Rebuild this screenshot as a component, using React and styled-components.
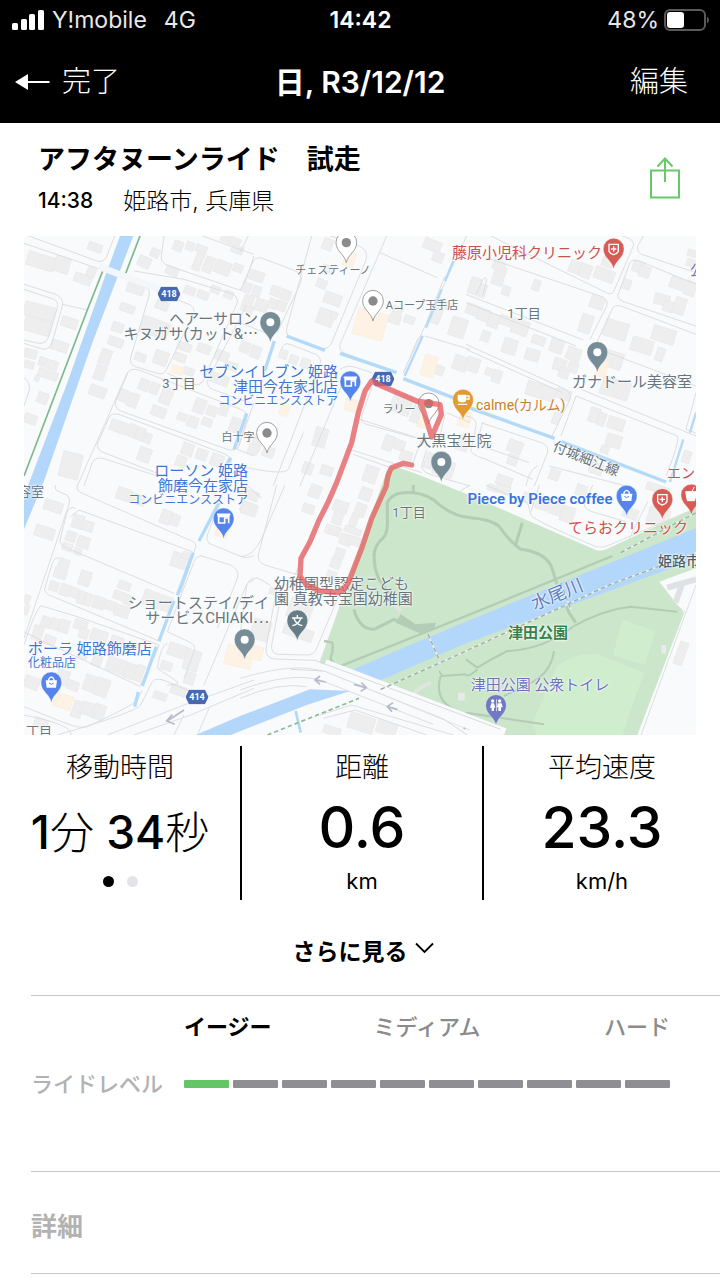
import React from "react";
import styled, { createGlobalStyle } from "styled-components";

const GlobalStyle = createGlobalStyle`
  *, *::before, *::after { box-sizing: border-box; }
  body {
    margin: 0;
    background: #fff;
    color: #000;
    font-family: Inter, "Noto Sans CJK JP", sans-serif;
  }
  button {
    padding: 0;
    border: 0;
    background: none;
    color: inherit;
    font: inherit;
    cursor: pointer;
  }
  h1, h2, p { margin: 0; }
`;

/* ---------- header ---------- */

const Header = styled.header`
  background: #000;
  color: #fff;
`;

const StatusBar = styled.div`
  display: grid;
  grid-template-columns: 1fr auto 1fr;
  align-items: center;
  height: 40px;
  padding: 0 11px 0 12px;
  font-size: 23px;
  line-height: 40px;
  color: #e8e8e8;
`;

const StatusGroup = styled.div`
  display: flex;
  align-items: center;
  justify-content: ${(p) => (p.$end ? "flex-end" : "flex-start")};
  gap: ${(p) => p.$gap}px;
`;

const Clock = styled.time`
  font-weight: 600;
  color: #fff;
`;

const NavBar = styled.nav`
  display: grid;
  grid-template-columns: 1fr auto 1fr;
  align-items: center;
  height: 83px;
  padding: 0 32px 0 14px;
  font-size: 29px;
`;

const NavButton = styled.button`
  display: flex;
  align-items: center;
  gap: 12px;
  justify-self: ${(p) => (p.$end ? "end" : "start")};
  font-weight: 300;
  line-height: 40px;
`;

const NavTitle = styled.h1`
  padding-left: 18px;
  font-size: 30px;
  font-weight: 600;
  line-height: 40px;
`;

/* ---------- ride summary ---------- */

const Summary = styled.section`
  display: flex;
  align-items: center;
  justify-content: space-between;
  height: 113px;
  padding: 0 40px 0 38px;
`;

const RideTitle = styled.h2`
  font-size: 27px;
  font-weight: 700;
  line-height: 42px;
`;

const RideMeta = styled.p`
  display: flex;
  gap: 30px;
  font-size: 23px;
  font-weight: 300;
  line-height: 40px;
`;

const StartTime = styled.time`
  font-size: 21px;
  font-weight: 500;
`;

/* ---------- map ---------- */

const MapFrame = styled.section`
  position: relative;
  margin: 0 24px;
  aspect-ratio: 672 / 499;
  overflow: hidden;
  background: #f8fafc;
  font-family: Roboto, "Noto Sans CJK JP", sans-serif;
`;

const MapLayer = styled.svg`
  position: absolute;
  inset: 0;
  width: 100%;
  height: 100%;
`;

const shifts = { left: "0", center: "-50%", right: "-100%" };

const MapLabel = styled.div`
  position: absolute;
  left: ${(p) => (p.$x / 672) * 100}%;
  top: ${(p) => (p.$y / 499) * 100}%;
  transform: translate(${(p) => shifts[p.$align || "center"]}, -50%) rotate(${(p) => p.$turn || 0}deg);
  text-align: ${(p) => p.$align || "center"};
  white-space: nowrap;
  font-size: ${(p) => p.$size || 15}px;
  line-height: 15px;
  font-weight: ${(p) => p.$weight || 400};
  color: ${(p) => p.$color || "#66757e"};
  text-shadow: 0 0 1px #fff, 0 0 2px #fff, 0 0 3px #fff;
`;

const LabelNote = styled.div`
  font-size: 12px;
  line-height: 13px;
`;

const RouteShield = styled.div`
  position: absolute;
  left: ${(p) => (p.$x / 672) * 100}%;
  top: ${(p) => (p.$y / 499) * 100}%;
  width: 23px;
  height: 15px;
  transform: translate(-50%, -50%);
  background: #4569b5;
  color: #fff;
  clip-path: polygon(16% 0, 84% 0, 100% 50%, 84% 100%, 16% 100%, 0 50%);
  text-align: center;
  font-size: 9px;
  font-weight: 700;
  line-height: 15px;
`;

/* ---------- stats ---------- */

const Stats = styled.section`
  display: grid;
  grid-template-columns: 240fr 2px 240fr 2px 236fr;
  margin-top: 11px;
  min-height: 154px;
`;

const StatRule = styled.div`
  background: #000;
`;

const Stat = styled.div`
  display: flex;
  flex-direction: column;
  align-items: center;
  white-space: nowrap;
`;

const StatLabel = styled.div`
  height: 40px;
  font-size: 27px;
  font-weight: 300;
  line-height: 43px;
`;

const StatValue = styled.div`
  height: 82px;
  font-size: ${(p) => (p.$compact ? 46 : 57)}px;
  font-weight: 500;
  line-height: ${(p) => (p.$compact ? 92 : 83)}px;
`;

const StatSuffix = styled.span`
  font-size: 44px;
  font-weight: 300;
`;

const StatUnit = styled.div`
  font-size: 22px;
  line-height: 26px;
`;

const Dots = styled.div`
  display: flex;
  gap: 13px;
  padding: 8px 0;
`;

const Dot = styled.span`
  width: 11px;
  height: 11px;
  border-radius: 50%;
  background: ${(p) => (p.$active ? "#000" : "#e4e4e8")};
`;

const MoreButton = styled.button`
  display: flex;
  align-items: center;
  justify-content: center;
  gap: 7px;
  width: 100%;
  height: 95px;
  padding: 4px 0 0 6px;
  font-size: 23px;
  font-weight: 700;

  svg {
    margin-bottom: 4px;
  }
`;

/* ---------- ride level and details ---------- */

const Panel = styled.section`
  margin-left: 31px;
  border-top: 1px solid #c8c8c8;
`;

const LevelPanel = styled(Panel)`
  display: grid;
  grid-template-columns: 153px 1fr;
  height: 176px;
  padding-right: 50px;
  grid-template-rows: 58px 60px;
  align-items: center;
`;

const LevelScale = styled.div`
  grid-column: 2;
  display: grid;
  grid-template-columns: 1fr auto 1fr;
  font-size: 22px;
  font-weight: 500;
  color: #8b8b8b;
`;

const LevelName = styled.span`
  color: ${(p) => (p.$active ? "#000" : "inherit")};
  font-weight: ${(p) => (p.$active ? 700 : "inherit")};
  text-align: ${(p) => p.$align || "left"};
`;

const LevelLabel = styled.h2`
  padding-bottom: 4px;
  font-size: 22px;
  font-weight: 500;
  color: #b2b2b2;
`;

const LevelMeter = styled.div`
  display: grid;
  grid-template-columns: repeat(10, 1fr);
  gap: 4px;
`;

const LevelStep = styled.span`
  height: 8px;
  border-radius: 1px;
  background: ${(p) => (p.$active ? "#64c466" : "#8f8e93")};
`;

const DetailPanel = styled(Panel)`
  height: 102px;
`;

const DetailTitle = styled.h2`
  font-size: 26px;
  font-weight: 700;
  line-height: 110px;
  color: #b2b2b2;
`;

/* ---------- icons ---------- */

const SignalIcon = () => (
  <svg width="32" height="20" viewBox="0 0 32 20" fill="#fff" aria-hidden="true">
    <rect x="0" y="13" width="6" height="7" rx="1.5" />
    <rect x="9" y="9" width="6" height="11" rx="1.5" />
    <rect x="17" y="4" width="6" height="16" rx="1.5" />
    <rect x="26" y="0" width="6" height="20" rx="1.5" />
  </svg>
);

const BatteryIcon = () => (
  <svg width="45" height="22" viewBox="0 0 45 22" aria-hidden="true">
    <rect x="1" y="1" width="40" height="20" rx="5" fill="none" stroke="#5a5a5a" strokeWidth="2" />
    <rect x="3" y="3" width="17" height="16" rx="3" fill="#fff" />
    <path d="M43 7.500Q45 8.500 45 11T43 14.500Z" fill="#5a5a5a" />
  </svg>
);

const BackIcon = () => (
  <svg width="36" height="18" viewBox="0 0 36 18" aria-hidden="true">
    <path d="M13 9H35.500" stroke="#fff" strokeWidth="2" />
    <path d="M1 9 14 1V17Z" fill="#fff" />
  </svg>
);

const ShareIcon = () => (
  <svg width="30" height="42" viewBox="0 0 30 42" fill="none" stroke="#66c968" strokeWidth="2" aria-hidden="true">
    <path d="M1 13.500H29V40.500H1Z" />
    <path d="M15 25V1.500M7.500 9.500 15 1.500 22.500 9.500" />
  </svg>
);

const ChevronIcon = () => (
  <svg width="19" height="12" viewBox="0 0 19 12" fill="none" stroke="#000" strokeWidth="1.800" aria-hidden="true">
    <path d="M1 1.500 9.500 10 18 1.500" />
  </svg>
);

/* ---------- map drawing ---------- */

/* The city is drawn in six sectors. Each building is [x, y, width, height, turn]. */
const sectors = [
  {
    x: 0,
    y: 0,
    streets: `M0 -5L130 42L218 75Q240 80 248 62L272 0M0 22L245 105M0 145L95 175Q120 185 115 210L85 318Q75 345 50 338L0 322
      M0 160L85 188Q105 195 100 215L75 300Q65 325 45 322L0 312M115 205L190 222M0 425Q22 440 15 465L0 510
      M420 0L412 60Q410 80 430 88L640 160Q655 165 660 150L690 60M535 0L690 55M275 115L362 152Q380 160 375 180L320 365Q315 385 335 392L400 412Q420 418 428 400L510 230Q512 212 495 205L395 165
      M430 412L510 445Q530 450 540 430L640 200Q642 180 620 172L480 130L330 105M690 165L552 430Q545 450 565 460L690 505
      M160 750L310 410Q320 395 345 402L650 520Q675 530 668 550L645 630Q633 648 610 640L290 525Q270 515 275 495L312 410
      M220 625L255 545Q262 530 285 535L605 655Q630 668 618 690M220 625Q220 645 240 650L400 712M180 750L205 680Q215 660 240 668L400 720M690 500L640 640L690 660`,
    buildings: [
      [8, 55, 85, 42, 17], [92, 62, 45, 48, 17], [150, 115, 52, 28, 20], [188, 95, 26, 28, 20], [192, 22, 42, 24, 20], [308, 145, 52, 28, 20],
      [0, 205, 92, 42, 14], [0, 248, 80, 44, 16], [112, 245, 48, 30, 18], [288, 205, 44, 24, 20], [264, 260, 34, 28, 20], [252, 305, 46, 26, 20],
      [228, 340, 32, 46, 20], [212, 388, 32, 44, 20], [196, 450, 50, 32, 20], [80, 315, 52, 30, 18], [44, 370, 58, 26, 18], [42, 402, 60, 26, 18],
      [46, 364, 20, 18, 20], [32, 418, 14, 18, 20], [40, 470, 32, 32, 20], [0, 340, 38, 26, 16], [0, 375, 30, 22, 16], [0, 535, 38, 28, 20],
      [110, 650, 60, 76, 14], [332, 352, 34, 24, 20], [390, 345, 42, 42, 20], [350, 250, 85, 50, 20], [395, 195, 38, 26, 20], [460, 320, 42, 24, 20],
      [450, 352, 36, 24, 20], [476, 395, 34, 22, 20], [520, 325, 40, 26, 20], [574, 345, 40, 30, 20], [600, 378, 40, 24, 20], [560, 415, 54, 30, 20],
      [342, 62, 38, 32, 25], [380, 38, 26, 26, 25], [425, 92, 38, 26, 22], [448, 15, 28, 30, 22], [486, 18, 24, 26, 22], [515, 28, 34, 22, 22],
      [510, 52, 24, 52, 22], [540, 62, 28, 48, 22], [572, 75, 48, 40, 22], [628, 84, 28, 24, 22], [590, 0, 60, 24, 22], [622, 30, 36, 22, 22],
      [480, 152, 34, 24, 22], [520, 165, 34, 24, 22], [560, 150, 28, 22, 22], [600, 165, 28, 22, 22], [650, 205, 38, 24, 22],
      [345, 430, 30, 34, 22], [378, 440, 26, 34, 22], [410, 455, 34, 50, 22], [282, 460, 30, 36, 20], [312, 472, 30, 42, 20], [382, 512, 44, 30, 20],
      [460, 532, 28, 22, 20], [490, 542, 32, 32, 20], [510, 488, 34, 44, 20], [548, 510, 30, 30, 20], [534, 546, 30, 24, 20], [586, 505, 26, 34, 20], [618, 545, 28, 44, 20],
      [258, 555, 52, 34, 20], [312, 565, 26, 38, 20], [336, 575, 26, 38, 20], [360, 592, 22, 30, 20], [342, 635, 38, 42, 20], [474, 622, 34, 36, 20], [516, 640, 34, 32, 20], [456, 660, 30, 32, 20], [560, 655, 38, 36, 20],
    ],
    shops: [[442, 390, 36, 24, 20]],
  },
  {
    x: 648,
    y: 0,
    streets: `M0 165L40 75Q50 60 70 68L160 102Q192 115 182 140L112 290M215 0L140 278Q136 300 158 308L248 338Q268 338 276 318L378 72Q385 45 362 32L250 -8
      M440 0L300 325Q296 345 316 352L460 405M420 50L592 125M680 0L490 410M615 120L560 258M555 300L690 340M550 300Q535 300 528 320L490 412
      M125 340Q130 318 150 325L228 355Q246 365 240 385L100 750M0 260L100 300M300 400Q320 385 350 395L395 410M320 410L180 750
      M395 455L365 540Q362 560 380 565L525 605M360 550L545 610M545 610L515 690M330 640L545 710M340 655L480 705M560 640L545 690Q545 705 570 715L690 750
      M490 430L690 500M615 535L600 600M620 530L690 560M0 690Q130 720 145 700L190 590M0 50L25 0M60 610L0 590`,
    buildings: [
      [248, 8, 30, 34, 22], [248, 88, 30, 20, 22], [230, 130, 30, 26, 22], [252, 172, 52, 34, 20], [232, 220, 50, 48, 20], [272, 228, 20, 20, 20],
      [28, 105, 44, 30, 18], [8, 140, 26, 30, 20], [38, 150, 24, 32, 20], [10, 178, 30, 32, 20], [45, 190, 40, 36, 20], [92, 150, 28, 30, 20], [122, 162, 30, 30, 20], [85, 188, 26, 30, 20], [112, 195, 26, 30, 20],
      [0, 318, 30, 32, 20], [32, 330, 30, 36, 20], [118, 342, 24, 26, 20], [148, 358, 26, 26, 20], [182, 368, 28, 28, 20], [448, 235, 34, 28, 20], [492, 240, 32, 22, 20], [458, 212, 30, 20, 20],
      [550, 12, 54, 32, 22], [578, 48, 32, 30, 22], [575, 215, 28, 48, 20], [598, 195, 32, 22, 20], [630, 245, 48, 58, 18], [578, 388, 34, 28, 20], [640, 360, 42, 44, 20],
      [455, 470, 34, 58, 20], [486, 480, 28, 60, 20], [516, 500, 26, 60, 20], [430, 598, 30, 46, 20], [462, 612, 32, 30, 20], [480, 645, 36, 30, 20], [372, 690, 40, 50, 20],
      [222, 575, 38, 58, 16], [242, 690, 36, 28, 18], [188, 680, 30, 34, 20], [35, 600, 30, 46, 20], [68, 632, 34, 32, 20], [25, 625, 30, 30, 20], [555, 650, 26, 48, 20], [580, 672, 62, 48, 18], [650, 600, 36, 44, 18],
    ],
    shops: [[345, 225, 92, 80, 16], [312, 48, 32, 44, 18], [548, 358, 40, 64, 16], [120, 505, 26, 34, 20], [535, 540, 26, 36, 20], [315, 490, 40, 36, 18], [655, 540, 34, 32, 20]],
  },
  {
    x: 1326,
    y: 0,
    streets: `M75 0L425 172Q440 178 446 160L502 30Q505 15 490 8L470 0M532 0L515 30Q512 50 530 56L690 110M690 145L520 75Q500 68 492 80L455 178Q455 190 470 196L690 270
      M60 65L408 182Q428 192 422 210L372 310M0 175L352 312M690 295L465 210Q445 205 438 220L392 320Q390 335 405 342L690 450M0 200L330 330M0 325L295 458Q318 470 312 490L258 600
      M50 180L62 130Q55 115 42 150L30 175M0 340L290 470M345 460L690 600M330 480L635 600Q640 620 600 720M330 480L285 600M0 540Q35 545 30 570L15 640Q10 655 60 670L200 730
      M45 560L232 622Q250 632 244 652L205 750M50 560L38 600Q35 625 60 635L190 680M690 470L660 580L690 592M180 750Q190 700 215 690M250 690L480 750`,
    buildings: [
      [310, 75, 32, 36, 20], [340, 85, 36, 40, 20], [385, 98, 60, 36, 20], [408, 65, 34, 28, 20], [500, 75, 34, 34, 18], [520, 90, 32, 34, 18], [470, 130, 24, 30, 20], [612, 125, 42, 34, 20], [655, 135, 34, 44, 20],
      [10, 125, 30, 50, 18], [40, 145, 20, 40, 18], [82, 90, 34, 58, 18], [108, 150, 24, 28, 18], [200, 132, 22, 32, 20], [80, 75, 36, 28, 20], [372, 182, 42, 36, 20], [342, 235, 36, 56, 18],
      [565, 175, 46, 32, 15], [592, 195, 30, 32, 18], [624, 185, 34, 50, 18], [0, 205, 40, 32, 20], [34, 218, 36, 36, 20], [66, 235, 34, 40, 20], [100, 240, 40, 28, 20], [138, 252, 50, 44, 20],
      [45, 285, 26, 32, 20], [110, 308, 42, 46, 18], [178, 340, 42, 34, 16], [252, 312, 40, 38, 20], [302, 335, 42, 38, 20], [198, 300, 40, 26, 20], [262, 368, 38, 36, 18], [306, 378, 30, 32, 20], [278, 398, 30, 28, 20],
      [0, 365, 40, 42, 18], [58, 398, 30, 22, 20], [80, 402, 26, 38, 20], [180, 445, 90, 42, 17], [270, 460, 44, 30, 20], [260, 530, 20, 34, 20], [415, 255, 70, 52, 17], [495, 308, 66, 42, 17], [558, 275, 70, 44, 17], [570, 335, 24, 40, 20],
      [402, 345, 68, 50, 17], [405, 430, 86, 54, 17], [370, 515, 30, 44, 18], [396, 530, 22, 40, 18], [425, 545, 50, 36, 18], [420, 596, 46, 38, 17], [404, 630, 24, 22, 20], [125, 614, 44, 36, 20], [125, 655, 30, 32, 20], [90, 720, 48, 30, 20], [650, 645, 24, 36, 18],
      [665, 42, 26, 20, 18], [662, 70, 30, 22, 18], [370, 680, 40, 34, 18], [250, 700, 30, 32, 20],
    ],
    shops: [[395, 372, 28, 48, 18], [0, 528, 12, 26, 18]],
  },
  {
    x: 0,
    y: 747,
    streets: `M95 0Q90 15 105 20L128 30Q140 40 136 55L0 460M160 0Q155 18 175 25L508 170Q522 178 512 195L470 325M155 70Q135 62 128 85L108 165Q108 182 130 190L450 325
      M105 220Q90 215 85 235L62 310Q60 325 80 332L410 470M50 362L160 395L405 480Q400 500 350 600M50 362Q30 385 0 480M140 95L165 75L505 200M0 440L60 470L350 605M355 615L340 645Q330 660 190 725Q170 735 100 705L0 665M690 210Q670 225 640 210L555 175Q545 165 550 150L590 50
      M530 212L620 240Q648 255 640 280L580 430M530 212Q515 215 510 230L430 440L490 468Q520 480 510 500L480 580M430 475Q410 480 400 550L460 590Q470 600 430 600
      M690 285Q670 290 665 305L540 600M500 620L430 590Q395 575 385 590L350 660Q340 680 100 750M690 585L480 660L250 750M690 610L500 690L330 750M555 670L520 750M480 690L450 750M140 750Q150 720 0 690`,
    buildings: [
      [60, 48, 56, 32, 18], [32, 125, 60, 34, 18], [145, 90, 34, 40, 16], [172, 108, 36, 30, 18], [126, 140, 30, 30, 20], [160, 155, 36, 34, 18], [115, 175, 30, 22, 20], [150, 190, 22, 20, 20],
      [104, 222, 32, 26, 20], [90, 250, 38, 30, 18], [166, 258, 34, 44, 18], [76, 290, 28, 28, 20], [108, 298, 28, 34, 20], [138, 308, 26, 30, 20], [162, 318, 20, 38, 20], [182, 325, 20, 38, 20], [206, 335, 36, 36, 18], [242, 348, 34, 28, 18], [272, 362, 44, 34, 18], [282, 290, 38, 24, 20], [268, 318, 32, 26, 20], [300, 330, 26, 30, 20], [355, 325, 90, 44, 20],
      [442, 205, 50, 44, 18], [475, 200, 22, 22, 18], [278, 10, 44, 36, 20], [318, 28, 46, 30, 20], [410, 75, 30, 42, 20], [440, 88, 26, 34, 20], [650, 52, 44, 32, 20],
      [52, 395, 30, 32, 20], [80, 400, 26, 34, 20], [105, 405, 30, 38, 18], [26, 422, 30, 44, 18], [60, 452, 34, 28, 20], [150, 405, 40, 30, 20], [165, 430, 28, 30, 20], [200, 435, 50, 36, 20], [260, 455, 38, 28, 20],
      [165, 498, 24, 24, 20], [205, 510, 28, 34, 20], [248, 515, 28, 44, 20], [278, 525, 26, 44, 20], [304, 535, 28, 46, 20], [334, 540, 24, 50, 20], [96, 555, 38, 44, 20], [130, 588, 34, 28, 20], [180, 570, 32, 48, 20], [212, 580, 42, 54, 20],
      [145, 648, 30, 50, 18], [172, 652, 36, 38, 18], [208, 658, 34, 46, 18], [432, 478, 56, 38, 18], [410, 530, 34, 26, 18], [482, 495, 44, 62, 18], [482, 562, 30, 36, 18], [440, 602, 46, 28, 20], [388, 622, 40, 22, 18], [30, 700, 40, 30, 20], [0, 330, 18, 26, 20], [0, 360, 14, 30, 20], [0, 575, 46, 36, 20],
    ],
    shops: [[605, 485, 80, 60, 14], [90, 628, 54, 42, 18], [575, 130, 36, 26, 18]],
  },
  {
    x: 648,
    y: 747,
    streets: `M110 0L55 210Q52 232 75 240L175 270M210 170L165 270M20 0L65 40M135 0L65 160Q40 215 0 215M0 450L20 300Q30 275 55 280L90 300M110 310L78 490Q76 520 105 522L225 526M125 320L95 480Q92 505 115 508L205 510Q222 508 230 490L295 335
      M0 580Q170 530 250 560L690 735M0 615Q150 560 240 585L580 718M0 640Q120 590 200 605M240 530L435 0M240 690L335 660L640 750M250 700L345 675L560 750M690 0L650 25`,
    buildings: [
      [208, 0, 34, 38, 20], [188, 58, 34, 26, 18], [280, 48, 44, 34, 18], [278, 80, 30, 38, 18], [256, 122, 46, 28, 18], [345, 55, 32, 40, 20], [330, 85, 22, 44, 20], [300, 148, 34, 32, 20], [325, 155, 36, 26, 18], [285, 190, 28, 30, 18], [272, 220, 30, 30, 20], [260, 258, 28, 26, 20], [360, 8, 34, 38, 20], [312, 128, 52, 18, 20],
      [0, 15, 56, 28, 20], [5, 55, 46, 36, 20], [325, 690, 78, 48, 18], [410, 712, 60, 36, 18], [250, 725, 52, 24, 18], [130, 425, 90, 34, 20], [145, 345, 70, 60, 20], [88, 310, 30, 20, 20], [35, 405, 54, 60, 18],
    ],
    shops: [[0, 480, 68, 40, 14]],
  },
  {
    x: 1326,
    y: 747,
    streets: "M60 0L185 55L195 90Q200 105 390 185Q410 190 430 180L690 70M220 0L195 80M380 0L355 60Q355 75 395 85L480 110M545 50L480 180M690 300L525 750M600 330L660 385",
    buildings: [[170, 25, 40, 28, 18], [210, 40, 38, 34, 18], [250, 55, 38, 34, 18], [285, 65, 40, 46, 18], [65, 0, 30, 18, 20], [90, 0, 42, 26, 20], [470, 70, 46, 30, 20], [545, 70, 64, 52, 16], [632, 470, 26, 70, 20], [540, 0, 70, 22, 18], [330, 0, 32, 32, 18]],
    shops: [],
  },
];

const Blocks = ({ list, fill, stroke }) =>
  list.map(([x, y, w, h, turn], i) => (
    <rect key={i} x={x} y={y} width={w} height={h} fill={fill} stroke={stroke} strokeWidth="2" transform={`rotate(${turn} ${x + w / 2} ${y + h / 2})`} />
  ));

const glyphs = {
  hole: <circle r="12" fill="#fff" />,
  quiet: <circle r="14" fill="#8b8b8b" />,
  store: (
    <g fill="none" stroke="#fff" strokeWidth="5">
      <path d="M-20 -13H20M-15 -7V13H3V-2H15V14" />
      <path d="M-18 -8H18" strokeWidth="8" />
    </g>
  ),
  bag: (
    <g>
      <path d="M-17 -7H17L14 15H-14Z" fill="#fff" />
      <path d="M-8 -5V-10Q0 -24 8 -10V-5" fill="none" stroke="#fff" strokeWidth="4" />
      <path d="M-7 1Q0 9 7 1" fill="none" stroke="#5484ec" strokeWidth="3" />
    </g>
  ),
  cross: (
    <g fill="none" stroke="#fff" strokeWidth="4">
      <path d="M-14 -14H14V7Q10 15 0 17Q-10 15 -14 7Z" />
      <path d="M0 -8V8M-8 0H8" />
    </g>
  ),
  cup: (
    <g>
      <path d="M-16 -16H10V-2Q10 7 1 7H-7Q-16 7 -16 -2Z" fill="#fff" />
      <path d="M10 -12H18V-3H10M-16 13H13" fill="none" stroke="#fff" strokeWidth="4" />
    </g>
  ),
  school: <path d="M-16 -8H16M0 -17V-8M-10 -6Q-3 11 15 15M10 -6Q3 11 -15 15" fill="none" stroke="#fff" strokeWidth="4" />,
  food: <path d="M-17 -10H15L10 17H-12ZM2 -11L9 -24" fill="#fff" stroke="#fff" strokeWidth="3" />,
  toilet: (
    <g fill="#fff">
      <circle cx="-10" cy="-13" r="5" />
      <circle cx="11" cy="-13" r="5" />
      <path d="M-14 -6H-6L-2 7H-6V17H-13V7H-18ZM5 -6H17L20 6H15V17H7V6H3ZM0 -18H2V18H0Z" />
    </g>
  ),
};

const pins = [
  [967, 20, "#fff", "quiet"],
  [1047, 195, "#fff", "quiet"],
  [739, 259, "#768d97", "hole"],
  [979, 437, "#5484ec", "store"],
  [729, 591, "#fff", "quiet"],
  [1214, 503, "#fff", "quiet"],
  [1317, 492, "#e39a32", "cup"],
  [1252, 678, "#768d97", "hole"],
  [1769, 39, "#d95b55", "cross"],
  [1720, 349, "#768d97", "hole"],
  [599, 848, "#5484ec", "store"],
  [662, 1211, "#768d97", "hole"],
  [82, 1340, "#5484ec", "bag"],
  [820, 1154, "#667d88", "school"],
  [1808, 780, "#5484ec", "bag"],
  [1915, 790, "#d95b55", "cross"],
  [2002, 777, "#d95b55", "food"],
  [1416, 1408, "#7079c4", "toilet"],
];

const Pin = ({ x, y, color, glyph }) => (
  <g transform={`translate(${x} ${y})`}>
    <path
      d="M0 60C-5 34 -31 27 -31 -1A31 31 0 0 1 31 -1C31 27 5 34 0 60Z"
      fill={color}
      stroke={color === "#fff" ? "#a0a0a0" : "#ffffff"}
      strokeWidth={color === "#fff" ? 3 : 1}
    />
    {glyphs[glyph]}
  </g>
);

const CityDrawing = () => (
  <MapLayer viewBox="0 0 2016 1497" preserveAspectRatio="none" aria-hidden="true">
    {sectors.map((s, i) => (
      <g key={i} transform={`translate(${s.x} ${s.y})`}>
        <Blocks list={s.buildings} fill="#eeeeef" stroke="#e8e8e9" />
        <Blocks list={s.shops} fill="#fdf2e4" stroke="#faeddd" />
        <path d={s.streets} fill="none" stroke="#dcdee1" strokeWidth="3" />
      </g>
    ))}

    {/* park */}
    <path d="M1088 705L1110 690L1180 715L1330 775L1716 942Q1730 948 1750 938L2016 815V997L1906 1037L1980 1132L1840 1497H1440L1326 1462L948 1307L888 1280Z" fill="#cce6cb" />
    <path d="M1525 1460L1600 1290Q1660 1245 1725 1257L1860 1310L1795 1497H1540ZM1795 1152L1893 1184L1863 1286L1767 1257Z" fill="#d0eecd" />
    <g fill="none" stroke="#b2ccb5" strokeWidth="9" strokeLinejoin="round">
      <path d="M1050 960Q1050 930 1078 905Q1092 890 1090 850V800Q1105 765 1168 770Q1215 775 1245 805Q1290 842 1340 845Q1400 850 1425 870Q1455 915 1490 940Q1570 950 1585 1000Q1595 1040 1615 1080L1635 1130L1655 1160" />
      <path d="M1050 955Q1050 1000 1065 1030L1110 1090M1168 747V770M1495 860L1475 925" />
      <path d="M990 1120Q1005 1180 1050 1180L1110 1150L1200 1185" />
      <path d="M900 1215L925 1220Q930 1240 920 1265Q925 1295 955 1288L1326 1140L1765 960" strokeWidth="7" />
      <path d="M1326 1270L1360 1295Q1400 1270 1450 1245Q1560 1240 1650 1170Q1740 1120 1820 1112L1960 1127M1360 1300Q1340 1320 1326 1318M1326 1430L1560 1465M1590 1245Q1580 1320 1500 1350L1440 1380M1245 1305L1255 1320L1326 1315M1250 1320Q1230 1390 1290 1420L1326 1435M1320 1480L1345 1430" strokeWidth="6" />
    </g>
    <path d="M1115 1160L1130 1135L1175 1165L1235 1160L1230 1180L1195 1195Z" fill="#b2ccb5" />
    <path d="M1170 1390L1175 1365L1220 1340M1115 1110L1130 1125" stroke="#e0e5e0" strokeWidth="11" fill="none" />
    <rect x="1912" y="1227" width="14" height="26" fill="#e8ebe8" />
    <rect x="1302" y="1370" width="20" height="24" fill="#e8ebe8" />

    {/* rivers and canals */}
    <path d="M288 0H328L205 320L60 735L0 880V780L130 440L240 130Z" fill="#b3d7fb" />
    <path d="M978 1305L1108 1248L1326 1157L2016 876V970L1326 1222L1025 1352Z" fill="#b3d7fb" />
    <path d="M515 1497L648 1440L858 1360L978 1365L848 1407L620 1497Z" fill="#b3d7fb" />
    <path d="M815 1425L830 1490" stroke="#b3d7fb" strokeWidth="8" />
    <g fill="none" stroke="#b3daf9" strokeWidth="10">
      <path d="M788 300L903 343M948 352L1118 410M1138 428L1326 500M1326 512L1592 607M1612 617L1926 738" />
      <path d="M751 315L722 405M668 532L630 640M620 665L605 690M585 800L525 915M508 950L460 1078M450 1095L405 1215M397 1232L355 1350M343 1368L332 1412" />
      <path d="M1142 420L1196 300M1206 275L1253 160M1263 135L1288 75M2016 530L1998 590M1978 610L1938 738" strokeWidth="7" />
    </g>
    <path d="M348 0L305 112M237 103L190 222L0 720" stroke="#7db98a" strokeWidth="5" fill="none" />

    {/* main roads */}
    <path d="M225 92L420 165" stroke="#f4f7fa" strokeWidth="20" />
    <path d="M900 1290L1330 1455L1440 1497" stroke="#f8fafc" strokeWidth="42" fill="none" />
    <path d="M870 1272L1000 1320L1430 1480M800 1300L900 1305L1260 1450L1330 1497" stroke="#d8dade" strokeWidth="3" fill="none" />
    <path d="M1070 1360L1326 1245L1500 1165M1500 1165L1760 1045L2016 950M1326 1245L1280 1265M1790 950L2016 830M1212 1195L1245 1270M1610 1040L1640 1120" stroke="#e6f1ee" strokeWidth="5" fill="none" />
    <path d="M1070 1360L1326 1245L1500 1165L1760 1045L2016 950M1790 950L2016 830M1212 1195L1245 1270M1610 1040L1640 1120" stroke="#9bae9d" strokeWidth="4" strokeDasharray="13 9" fill="none" />
    <path d="M730 1497L1005 1387" stroke="#8cba91" strokeWidth="5" strokeDasharray="13 9" />
    <path d="M1930 1055L2016 1030M1975 1040L1955 1100" stroke="#dfe2e4" strokeWidth="18" fill="none" />
    <g fill="none" stroke="#b6bac9" strokeWidth="5">
      <path d="M905 1338L875 1332M888 1320L873 1332L888 1345M990 1345L1025 1355M1012 1340L1027 1355L1010 1366M1120 1420L1090 1412M1107 1400L1090 1412L1104 1427M480 1422L430 1455M445 1436L428 1455L452 1465" />
    </g>
    {pins.map(([x, y, color, glyph]) => (
      <Pin key={`${x}-${y}`} x={x} y={y} color={color} glyph={glyph} />
    ))}
  </MapLayer>
);

const RideTrack = () => (
  <MapLayer viewBox="0 0 2016 1497" preserveAspectRatio="none" role="img" aria-label="走行ルート">
    <path
      d="M1163 687L1138 682L1103 695Q1090 715 1087 750L1043 847L1013 937L973 1040Q960 1068 940 1070L888 1065L848 1048L828 1020L831 967L858 917L883 857L913 797L938 740L983 620L1003 530L1023 465L1043 435L1073 450L1178 495L1248 506L1252 535L1223 603L1193 506"
      fill="none"
      stroke="#e45f61"
      strokeOpacity="0.780"
      strokeWidth="16"
      strokeLinejoin="round"
      strokeLinecap="round"
    />
  </MapLayer>
);

const blue = "#3d76d3";
const red = "#c9514b";

const labels = [
  { x: 309, y: 34, text: ["チェスティーノ"], size: 11 },
  { x: 503, y: 17, text: ["藤原小児科クリニック"], color: red },
  { x: 398, y: 69, text: ["Aコープ玉手店"], size: 11 },
  { x: 500, y: 77, text: ["1丁目"], size: 13 },
  { x: 234, y: 91, text: ["ヘアーサロン", "キヌガサ(カット&⋯"], align: "right" },
  { x: 155, y: 147, text: ["3丁目"], size: 13 },
  { x: 314, y: 150, text: ["セブンイレブン 姫路", "津田今在家北店"], note: "コンビニエンスストア", align: "right", color: blue },
  { x: 375, y: 173, text: ["ラリー"], size: 11 },
  { x: 452, y: 169, text: ["calme(カルム)"], align: "left", size: 14, color: "#c77f2a" },
  { x: 608, y: 146, text: ["ガナドール美容室"] },
  { x: 562, y: 223, text: ["付城細江線"], size: 14, turn: 22 },
  { x: 430, y: 205, text: ["大黒宝生院"] },
  { x: 214, y: 201, text: ["白十字"], size: 11 },
  { x: 224, y: 249, text: ["ローソン 姫路", "飾磨今在家店"], note: "コンビニエンスストア", align: "right", color: blue },
  { x: 20, y: 255, text: ["容室"], size: 13, align: "right" },
  { x: 385, y: 276, text: ["1丁目"], size: 13 },
  { x: 516, y: 263, text: ["Piece by Piece coffee"], size: 15, weight: 600, color: "#3874dc" },
  { x: 604, y: 292, text: ["てらおクリニック"], color: red },
  { x: 643, y: 237, text: ["エン"], align: "left", size: 14, color: red },
  { x: 634, y: 325, text: ["姫路市"], align: "left", size: 14, weight: 500, color: "#4f5f68" },
  { x: 533, y: 358, text: ["水尾川"], size: 18, turn: -22, color: "#5a80be" },
  { x: 514, y: 397, text: ["津田公園"], weight: 700, color: "#37824a" },
  { x: 516, y: 449, text: ["津田公園 公衆トイレ"], color: "#6c72bd" },
  { x: 250, y: 356, text: ["幼稚園型認定こども", "園 真教寺宝国幼稚園"], align: "left" },
  { x: 245, y: 375, text: ["ショートステイ/デイ", "サービスCHIAKI⋯"], align: "right" },
  { x: 4, y: 420, text: ["ポーラ 姫路飾磨店"], note: "化粧品店", align: "left", color: blue },
  { x: 2, y: 495, text: ["丁目"], align: "left", size: 13 },
  { x: 666, y: 34, text: ["公"], align: "left", size: 14, color: "#6c72bd" },
];

const shields = [
  { x: 145, y: 58, number: 418 },
  { x: 359, y: 143, number: 418 },
  { x: 173, y: 461, number: 414 },
];

const RideMap = () => (
  <MapFrame aria-label="地図">
    <CityDrawing />
    {labels.map((l, i) => (
      <MapLabel key={i} $x={l.x} $y={l.y} $align={l.align} $size={l.size} $weight={l.weight} $color={l.color} $turn={l.turn}>
        {l.text.map((line) => (
          <div key={line}>{line}</div>
        ))}
        {l.note && <LabelNote>{l.note}</LabelNote>}
      </MapLabel>
    ))}
    {shields.map((s, i) => (
      <RouteShield key={i} $x={s.x} $y={s.y}>
        {s.number}
      </RouteShield>
    ))}
    <RideTrack />
  </MapFrame>
);

/* ---------- page ---------- */

export default function App() {
  return (
    <>
      <GlobalStyle />
      <Header>
        <StatusBar>
          <StatusGroup $gap={8}>
            <SignalIcon />
            <StatusGroup $gap={17}>
              <span>Y!mobile</span>
              <span>4G</span>
            </StatusGroup>
          </StatusGroup>
          <Clock>14:42</Clock>
          <StatusGroup $end $gap={5}>
            <span>48%</span>
            <BatteryIcon />
          </StatusGroup>
        </StatusBar>
        <NavBar>
          <NavButton type="button">
            <BackIcon />
            完了
          </NavButton>
          <NavTitle>日, R3/12/12</NavTitle>
          <NavButton type="button" $end>
            編集
          </NavButton>
        </NavBar>
      </Header>

      <main>
        <Summary>
          <div>
            <RideTitle>アフタヌーンライド　試走</RideTitle>
            <RideMeta>
              <StartTime>14:38</StartTime>
              <span>姫路市, 兵庫県</span>
            </RideMeta>
          </div>
          <button type="button" aria-label="共有">
            <ShareIcon />
          </button>
        </Summary>

        <RideMap />

        <Stats>
          <Stat>
            <StatLabel>移動時間</StatLabel>
            <StatValue $compact>
              1<StatSuffix>分</StatSuffix> 34<StatSuffix>秒</StatSuffix>
            </StatValue>
            <Dots>
              <Dot $active />
              <Dot />
            </Dots>
          </Stat>
          <StatRule />
          <Stat>
            <StatLabel>距離</StatLabel>
            <StatValue>0.6</StatValue>
            <StatUnit>km</StatUnit>
          </Stat>
          <StatRule />
          <Stat>
            <StatLabel>平均速度</StatLabel>
            <StatValue>23.3</StatValue>
            <StatUnit>km/h</StatUnit>
          </Stat>
        </Stats>

        <MoreButton type="button">
          さらに見る
          <ChevronIcon />
        </MoreButton>

        <LevelPanel>
          <LevelScale>
            <LevelName $active>イージー</LevelName>
            <LevelName $align="center">ミディアム</LevelName>
            <LevelName $align="right">ハード</LevelName>
          </LevelScale>
          <LevelLabel id="ride-level">ライドレベル</LevelLabel>
          <LevelMeter role="meter" aria-labelledby="ride-level" aria-valuemin={0} aria-valuemax={10} aria-valuenow={1}>
            {Array.from({ length: 10 }, (_, i) => (
              <LevelStep key={i} $active={i < 1} />
            ))}
          </LevelMeter>
        </LevelPanel>

        <DetailPanel>
          <DetailTitle>詳細</DetailTitle>
        </DetailPanel>
        <Panel />
      </main>
    </>
  );
}
